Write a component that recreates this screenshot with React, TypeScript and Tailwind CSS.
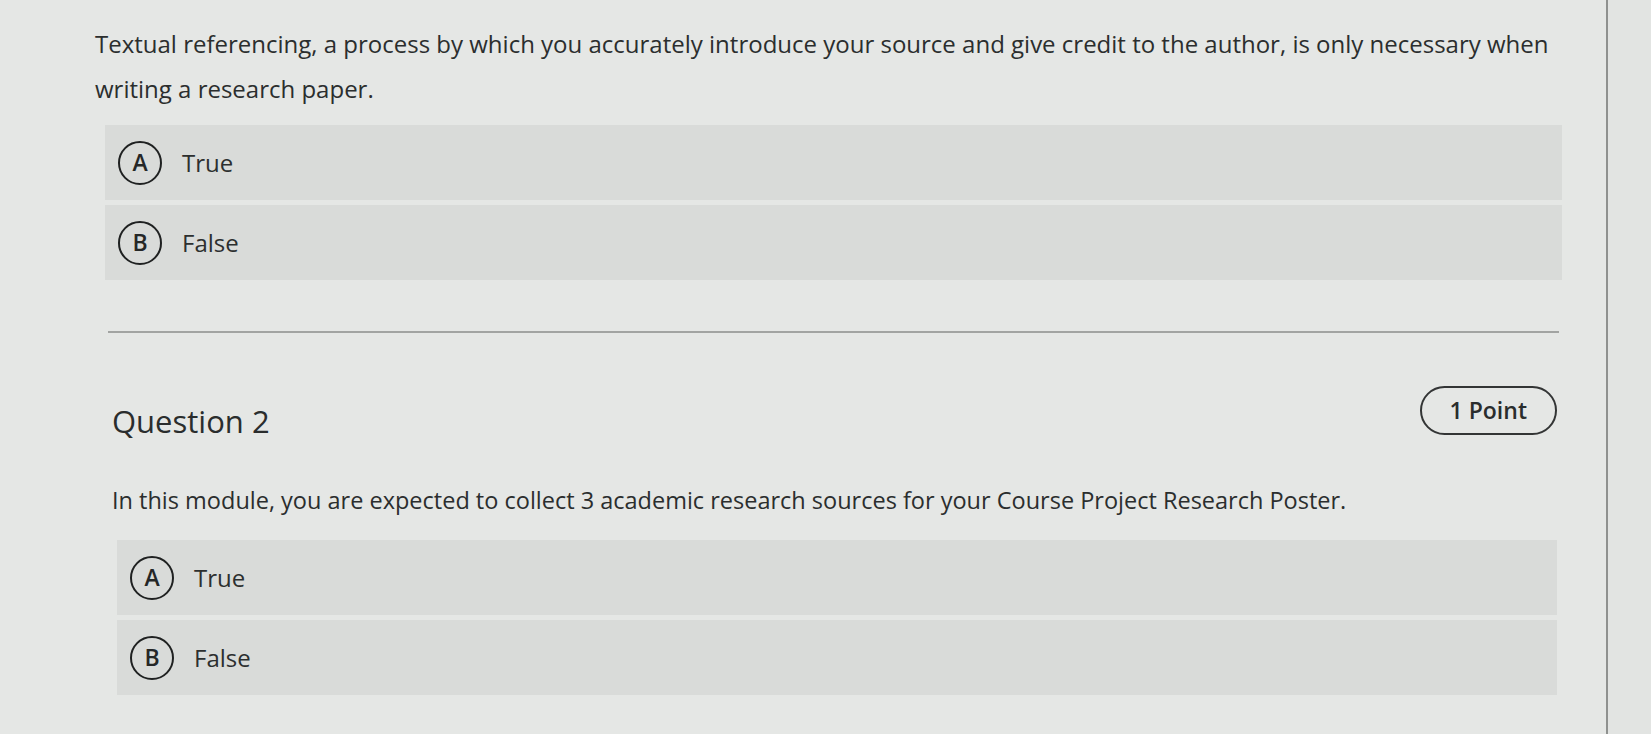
import React from 'react';

const FONT = { fontFamily: '"Open Sans", "Noto Sans", sans-serif' };

type Choice = { letter: string; label: string };

const CHOICES: Choice[] = [
  { letter: 'A', label: 'True' },
  { letter: 'B', label: 'False' },
];

function ChoiceRow({ choice }: { choice: Choice }) {
  return (
    <div className="h-[75px] bg-[#d9dbd9] flex items-center pl-[13px] gap-[20px]">
      <span className="w-[44px] h-[44px] rounded-full border-[2.5px] border-[#1f2121] flex items-center justify-center text-[23px] font-semibold text-[#252727] leading-none">
        {choice.letter}
      </span>
      <span className="text-[24px] text-[#2c2f2f]">{choice.label}</span>
    </div>
  );
}

function ChoiceList() {
  return (
    <div className="flex flex-col gap-[5px]">
      {CHOICES.map((c) => (
        <ChoiceRow key={c.letter} choice={c} />
      ))}
    </div>
  );
}

export default function App() {
  return (
    <div className="w-full h-[734px] bg-[#e2e4e2] flex overflow-hidden" style={FONT}>
      <div className="w-[1608px] shrink-0 h-full bg-[#e5e7e5] border-r-2 border-[#8f918f]">
        {/* Question 1 (tail) */}
        <div className="pt-[21px] pl-[95px]">
          <p className="w-[1480px] text-[24px] leading-[45px] text-[#2b2e2e]">
            Textual referencing, a process by which you accurately introduce your source and give credit to the author, is only necessary when writing a research paper.
          </p>
          <div className="mt-[14px] ml-[10px] w-[1457px]">
            <ChoiceList />
          </div>
        </div>

        <div className="mt-[51px] ml-[108px] w-[1451px] h-[2px] bg-[#a2a4a2]" />

        {/* Question 2 */}
        <div className="pl-[112px] w-[1557px]">
          <div className="mt-[53px] flex items-start justify-between">
            <h2 className="mt-[17px] text-[31px] leading-[36px] text-[#2a2d2d]">Question 2</h2>
            <span className="h-[49px] px-[28px] rounded-full border-2 border-[#333535] flex items-center text-[23px] font-semibold text-[#2a2d2d]">
              1 Point
            </span>
          </div>
          <p className="mt-[42px] text-[23.5px] leading-[38px] text-[#2b2e2e]">
            In this module, you are expected to collect 3 academic research sources for your Course Project Research Poster.
          </p>
          <div className="mt-[21px] ml-[5px]">
            <ChoiceList />
          </div>
        </div>
      </div>
    </div>
  );
}
